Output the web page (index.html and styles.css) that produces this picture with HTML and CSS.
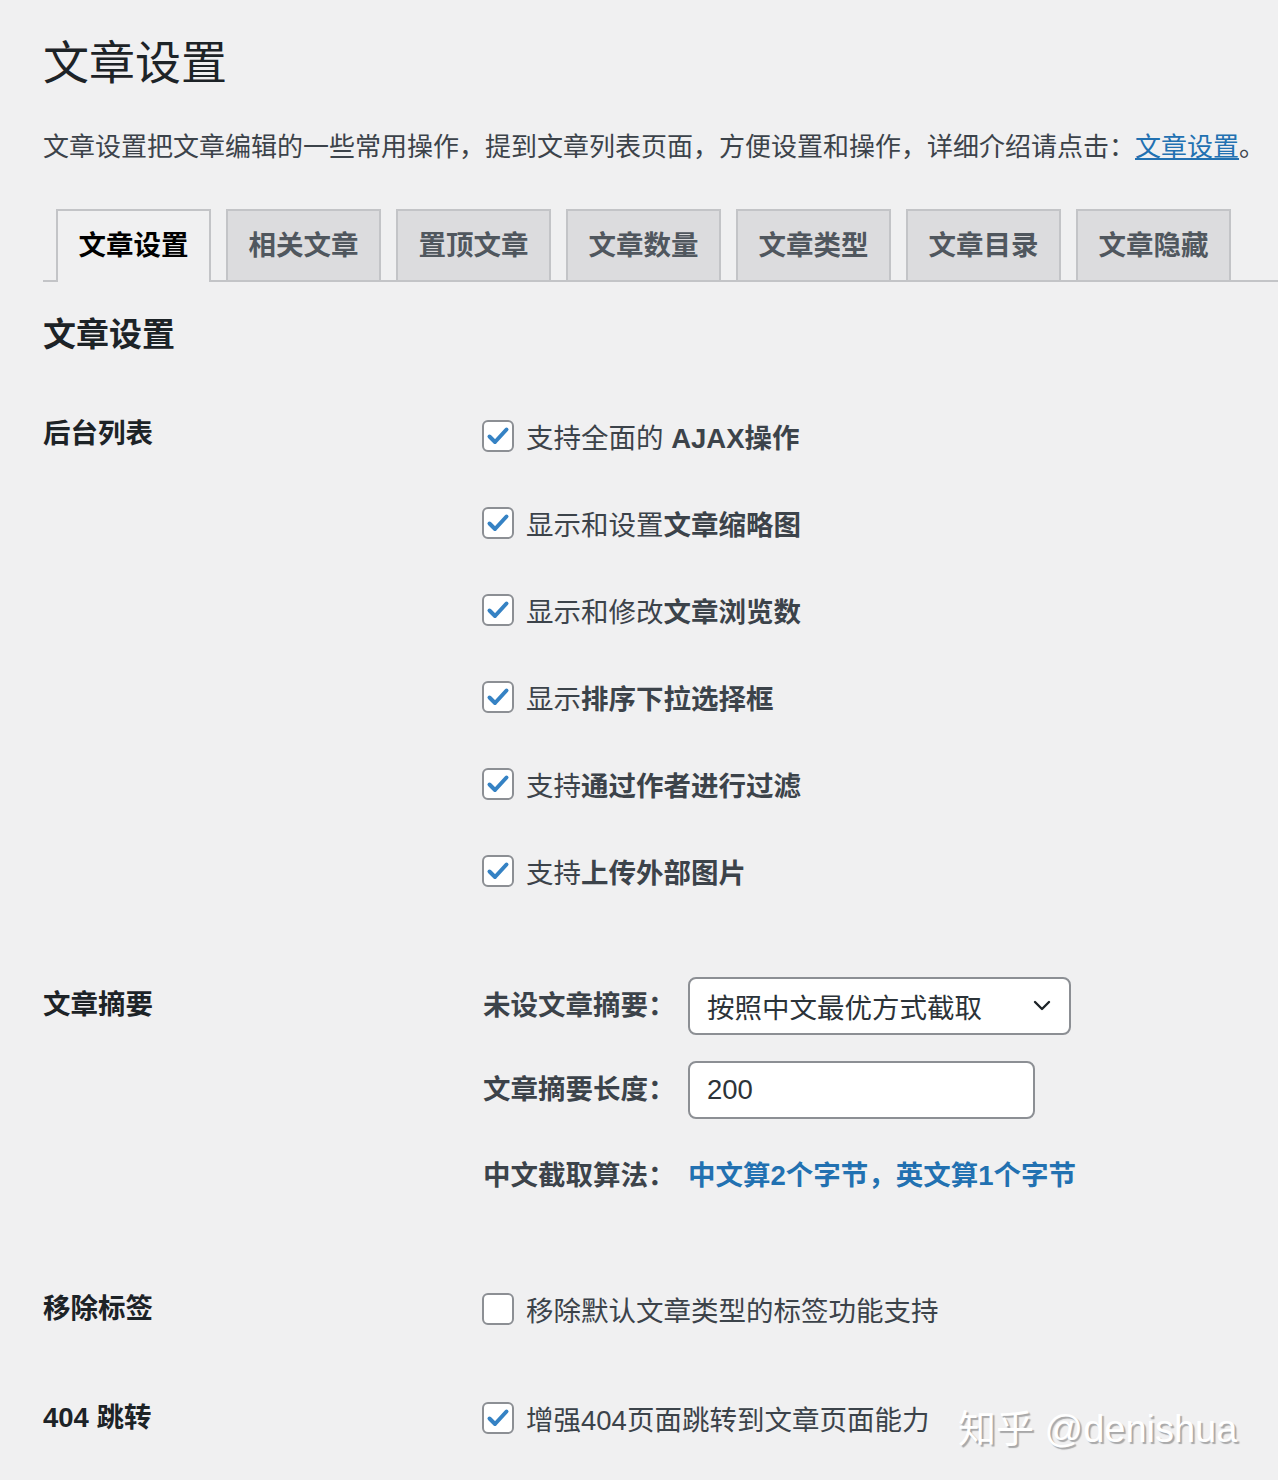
FILE: index.html
```html
<!DOCTYPE html>
<html lang="zh-CN">
<head>
    <meta charset="UTF-8">
    <title>文章设置</title>
    <link rel="stylesheet" href="styles.css">
</head>
<body>
    <div class="wrap">
        <h1>文章设置</h1>
        <p class="desc">文章设置把文章编辑的一些常用操作，提到文章列表页面，方便设置和操作，详细介绍请点击：<a href="#">文章设置</a>。</p>

        <nav class="tabs">
            <a href="#" class="tab active">文章设置</a>
            <a href="#" class="tab">相关文章</a>
            <a href="#" class="tab">置顶文章</a>
            <a href="#" class="tab">文章数量</a>
            <a href="#" class="tab">文章类型</a>
            <a href="#" class="tab">文章目录</a>
            <a href="#" class="tab">文章隐藏</a>
        </nav>

        <h2>文章设置</h2>

        <!-- 后台列表 -->
        <div class="row row-list">
            <div class="th">后台列表</div>
            <div class="td">
                <label class="check"><span class="box"><svg viewBox="0 0 28 28"><polyline points="5.5,14.5 11,20 22.5,7.5"/></svg></span><span>支持全面的 <b>AJAX操作</b></span></label>
                <label class="check"><span class="box"><svg viewBox="0 0 28 28"><polyline points="5.5,14.5 11,20 22.5,7.5"/></svg></span><span>显示和设置<b>文章缩略图</b></span></label>
                <label class="check"><span class="box"><svg viewBox="0 0 28 28"><polyline points="5.5,14.5 11,20 22.5,7.5"/></svg></span><span>显示和修改<b>文章浏览数</b></span></label>
                <label class="check"><span class="box"><svg viewBox="0 0 28 28"><polyline points="5.5,14.5 11,20 22.5,7.5"/></svg></span><span>显示<b>排序下拉选择框</b></span></label>
                <label class="check"><span class="box"><svg viewBox="0 0 28 28"><polyline points="5.5,14.5 11,20 22.5,7.5"/></svg></span><span>支持<b>通过作者进行过滤</b></span></label>
                <label class="check"><span class="box"><svg viewBox="0 0 28 28"><polyline points="5.5,14.5 11,20 22.5,7.5"/></svg></span><span>支持<b>上传外部图片</b></span></label>
            </div>
        </div>

        <!-- 文章摘要 -->
        <div class="row row-excerpt">
            <div class="th">文章摘要</div>
            <div class="td">
                <div class="field">
                    <span class="field-label">未设文章摘要：</span>
                    <div class="select">
                        <span>按照中文最优方式截取</span>
                        <svg width="20" height="12" viewBox="0 0 20 12"><polyline points="3,2 10,9 17,2" fill="none" stroke="#1d2327" stroke-width="2.4" stroke-linecap="round" stroke-linejoin="round"/></svg>
                    </div>
                </div>
                <div class="field">
                    <span class="field-label">文章摘要长度：</span>
                    <div class="input">200</div>
                </div>
                <div class="field field-note">
                    <span class="field-label">中文截取算法：</span>
                    <span class="note">中文算2个字节，英文算1个字节</span>
                </div>
            </div>
        </div>

        <!-- 移除标签 -->
        <div class="row row-single row-tags">
            <div class="th">移除标签</div>
            <div class="td">
                <label class="check"><span class="box"></span><span>移除默认文章类型的标签功能支持</span></label>
            </div>
        </div>

        <!-- 404 跳转 -->
        <div class="row row-single row-404">
            <div class="th">404 跳转</div>
            <div class="td">
                <label class="check"><span class="box"><svg viewBox="0 0 28 28"><polyline points="5.5,14.5 11,20 22.5,7.5"/></svg></span><span>增强404页面跳转到文章页面能力</span></label>
            </div>
        </div>

        <div class="watermark">知乎 @denishua</div>
    </div>
</body>
</html>
```

FILE: styles.css
```css
body {
    margin: 0;
    background-color: #f0f0f1;
    color: #1d2327;
    font-family: "Liberation Sans", "Noto Sans CJK SC", sans-serif;
}

.wrap {
    position: relative;
    padding-left: 43px;
    min-height: 1480px;
    box-sizing: border-box;
}

h1 {
    margin: 0;
    padding-top: 33px;
    font-size: 46px;
    font-weight: 400;
    line-height: 60px;
}

.desc {
    margin: 34px 0 0;
    font-size: 26px;
    line-height: 40px;
    color: #3c434a;
    white-space: nowrap;
}

.desc a {
    color: #2271b1;
}

/* tabs */
.tabs {
    display: flex;
    gap: 15px;
    margin-top: 42px;
    padding-left: 13px;
    border-bottom: 2px solid #c3c4c7;
}

.tab {
    width: 155px;
    height: 71px;
    box-sizing: border-box;
    border: 2px solid #c3c4c7;
    border-bottom: none;
    background-color: #dcdcde;
    color: #50575e;
    font-size: 27.5px;
    font-weight: bold;
    line-height: 69px;
    text-align: center;
    text-decoration: none;
}

.tab.active {
    background-color: #f0f0f1;
    color: #000;
    height: 73px;
    margin-bottom: -2px;
}

h2 {
    margin: 31px 0 0;
    font-size: 33px;
    font-weight: bold;
    line-height: 44px;
}

/* form rows */
.row {
    display: flex;
}

.th {
    width: 440px;
    flex-shrink: 0;
    padding-top: 22px;
    font-size: 27.5px;
    font-weight: bold;
    line-height: 40px;
}

.td {
    flex: 1;
}

.row-list {
    margin-top: 35px;
}

.row-excerpt {
    margin-top: 63px;
}

.row-excerpt .th {
    padding-top: 8px;
}

.row-single .th {
    padding-top: 24px;
}

.row-tags {
    margin-top: 69px;
}

.row-404 {
    margin-top: 22px;
}

.check {
    display: flex;
    align-items: center;
    height: 87px;
    font-size: 27.5px;
    color: #3c434a;
}

.check b {
    font-weight: bold;
}

.box {
    width: 32px;
    height: 32px;
    box-sizing: border-box;
    margin-right: 12px;
    margin-left: -1px;
    border: 2px solid #8c8f94;
    border-radius: 6px;
    background-color: #fff;
    flex-shrink: 0;
}

.box svg {
    display: block;
    width: 28px;
    height: 28px;
}

.box polyline {
    fill: none;
    stroke: #3582c4;
    stroke-width: 4;
    stroke-linecap: round;
    stroke-linejoin: round;
}

.field {
    display: flex;
    align-items: center;
    margin-bottom: 26px;
}

.field-label {
    width: 205px;
    flex-shrink: 0;
    font-size: 27.5px;
    font-weight: bold;
    color: #3c434a;
    line-height: 40px;
}

.select,
.input {
    height: 58px;
    box-sizing: border-box;
    border: 2px solid #8c8f94;
    border-radius: 8px;
    background-color: #fff;
    padding: 0 17px;
    font-size: 27.5px;
    color: #2c3338;
    display: flex;
    align-items: center;
}

.select {
    width: 383px;
    justify-content: space-between;
}

.input {
    width: 347px;
}

.field-note {
    margin-top: 37px;
    margin-bottom: 0;
}

.note {
    font-size: 27.5px;
    font-weight: bold;
    color: #2271b1;
    line-height: 40px;
}

.watermark {
    position: absolute;
    left: 958px;
    top: 1404px;
    font-size: 38px;
    line-height: 50px;
    color: #fff;
    text-shadow: 2px 2px 1px rgba(0, 0, 0, 0.3);
    white-space: nowrap;
}
```
